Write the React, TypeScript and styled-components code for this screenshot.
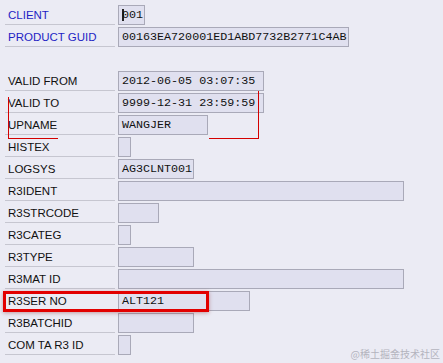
import styled, { createGlobalStyle } from "styled-components";

const GlobalStyle = createGlobalStyle`
  html, body {
    margin: 0;
    padding: 0;
    background: #ebebf4;
  }
`;

type Row = {
  label: string;
  value?: string;
  width?: number;
  blue?: boolean;
  caret?: boolean;
};

const rows: (Row | null)[] = [
  { label: "CLIENT", value: "001", width: 27, blue: true, caret: true },
  { label: "PRODUCT GUID", value: "00163EA720001ED1ABD7732B2771C4AB", width: 231, blue: true },
  null,
  { label: "VALID FROM", value: "2012-06-05 03:07:35", width: 146 },
  { label: "VALID TO", value: "9999-12-31 23:59:59", width: 146 },
  { label: "UPNAME", value: "WANGJER", width: 90 },
  { label: "HISTEX", width: 13 },
  { label: "LOGSYS", value: "AG3CLNT001", width: 76 },
  { label: "R3IDENT", width: 286 },
  { label: "R3STRCODE", width: 41 },
  { label: "R3CATEG", width: 13 },
  { label: "R3TYPE", width: 76 },
  { label: "R3MAT ID", width: 286 },
  { label: "R3SER NO", value: "ALT121", width: 132 },
  { label: "R3BATCHID", width: 76 },
  { label: "COM TA R3 ID", width: 13 },
];

// red pen marks drawn over the screenshot
const marks = [
  { x: 8, y: 97, w: 1, h: 42 },
  { x: 8, y: 138, w: 50, h: 1 },
  { x: 209, y: 138, w: 50, h: 1 },
  { x: 258, y: 91, w: 1, h: 48 },
];

const App = () => {
  return (
    <>
      <GlobalStyle />
      <Screen>
        <Form>
          {rows.map((row, i) =>
            row ? (
              <FieldRow key={i}>
                <Label $blue={row.blue}>{row.label}</Label>
                <Input $w={row.width ?? 13}>
                  {row.caret && <Caret />}
                  {row.value}
                </Input>
              </FieldRow>
            ) : (
              <Spacer key={i} />
            )
          )}
        </Form>
        {marks.map((m, i) => (
          <ThinMark key={i} $x={m.x} $y={m.y} $w={m.w} $h={m.h} />
        ))}
        <Highlight />
        <Watermark>@稀土掘金技术社区</Watermark>
      </Screen>
    </>
  );
};

export default App;

const Screen = styled.div`
  position: relative;
  width: 443px;
  height: 363px;
  overflow: hidden;
  background: #ebebf4;
`;

const Form = styled.div`
  display: flex;
  flex-direction: column;
  padding: 4px 0 0 5px;
`;

const FieldRow = styled.div`
  display: flex;
  align-items: flex-start;
  gap: 3px;
  height: 22px;
`;

const Spacer = styled.div`
  height: 22px;
`;

const Label = styled.div<{ $blue?: boolean }>`
  width: 110px;
  height: 21px;
  box-sizing: border-box;
  border-bottom: 1px solid #c6c6d0;
  display: flex;
  align-items: center;
  padding: 1px 0 0 3px;
  font-family: "Liberation Sans", Arial, sans-serif;
  font-size: 11.5px;
  color: ${(p) => (p.$blue ? "#1f1fc4" : "#111")};
  white-space: nowrap;
`;

const Input = styled.div<{ $w: number }>`
  width: ${(p) => p.$w}px;
  height: 20px;
  margin-top: 1px;
  box-sizing: border-box;
  border: 1px solid #a9a9b8;
  background: #e0e0ef;
  display: flex;
  align-items: center;
  padding-left: 3px;
  font-family: "Liberation Mono", "Courier New", monospace;
  font-size: 11.7px;
  color: #111;
  white-space: nowrap;
  overflow: hidden;
`;

const Caret = styled.span`
  flex: none;
  width: 2px;
  height: 12px;
  margin-right: -2px;
  background: #222;
`;

const ThinMark = styled.div<{ $x: number; $y: number; $w: number; $h: number }>`
  position: absolute;
  left: ${(p) => p.$x}px;
  top: ${(p) => p.$y}px;
  width: ${(p) => p.$w}px;
  height: ${(p) => p.$h}px;
  background: #d40000;
`;

const Highlight = styled.div`
  position: absolute;
  left: 3px;
  top: 291px;
  width: 206px;
  height: 21px;
  box-sizing: border-box;
  border: 3px solid #e20000;
  box-shadow: 0 1px 4px rgba(120, 0, 0, 0.35);
`;

const Watermark = styled.div`
  position: absolute;
  right: 3px;
  bottom: 2px;
  font-family: "Noto Sans CJK SC", sans-serif;
  font-size: 10px;
  color: #b4b4be;
`;
